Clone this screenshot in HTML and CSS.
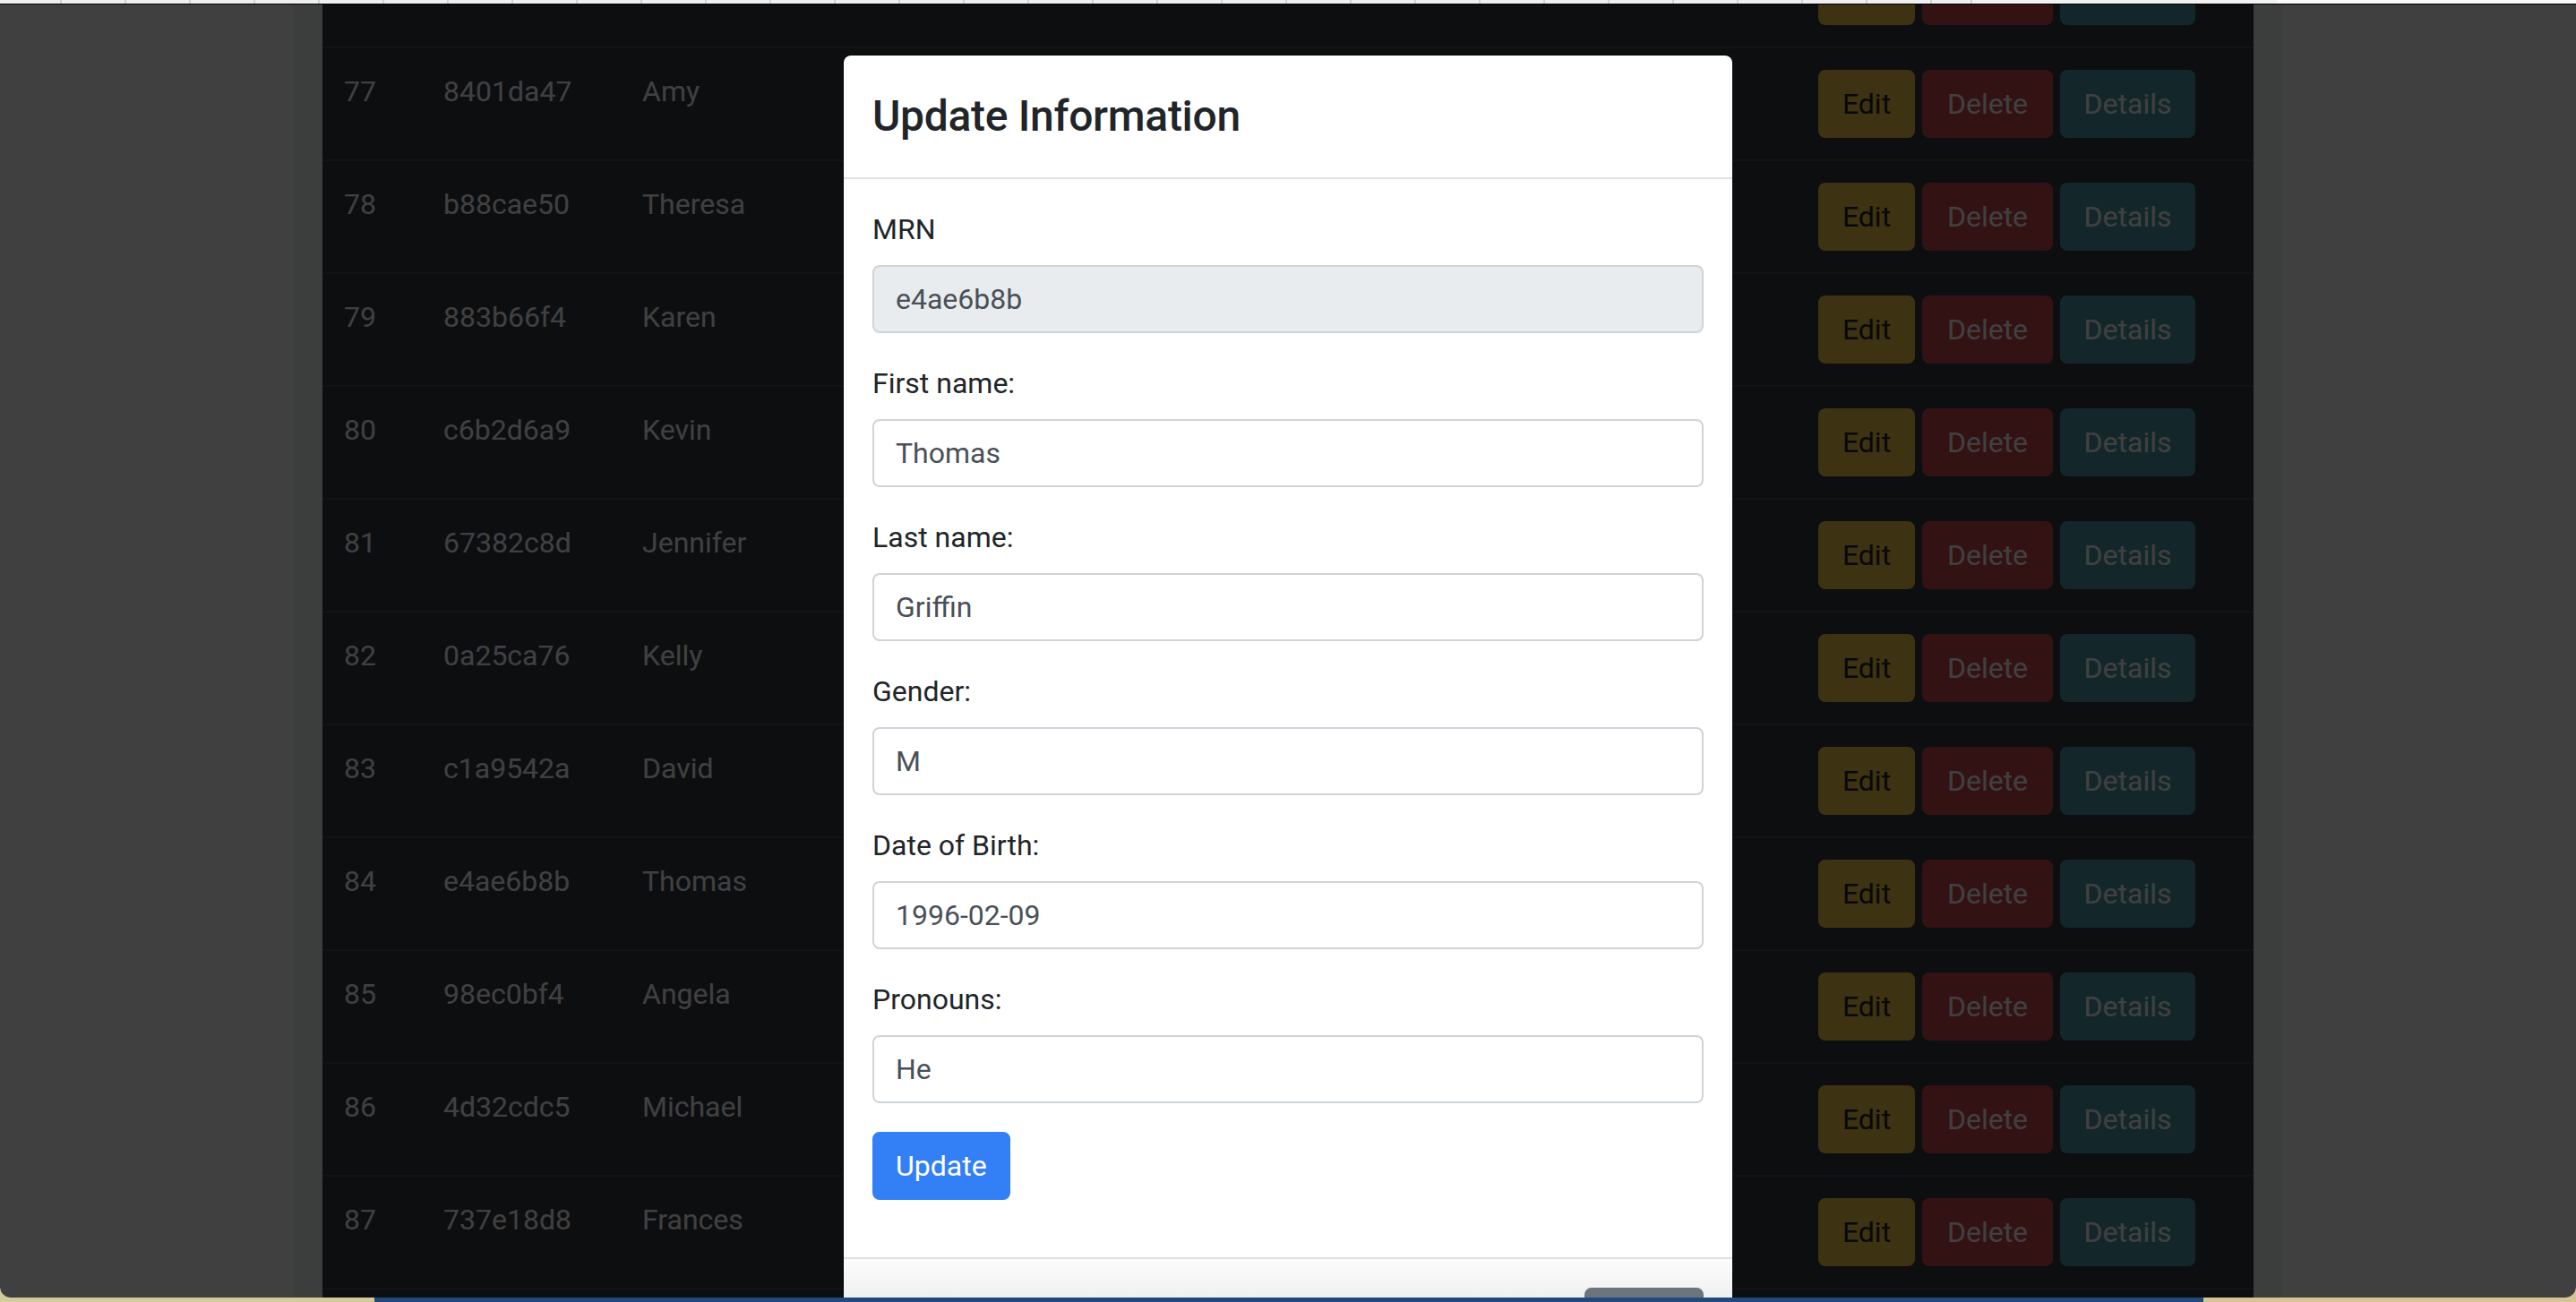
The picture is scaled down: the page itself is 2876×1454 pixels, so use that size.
FILE: index.html
```html
<!DOCTYPE html>
<html lang="en">
<head>
<meta charset="utf-8">
<title>Patients</title>
<link rel="stylesheet" href="styles.css">
</head>
<body>
<div class="window">
  <div class="tabstrip">
    <div class="tabs"></div>
    <div class="tab-rest"></div>
    <div class="tab-active"></div>
  </div>
  <div class="viewport">
    <main class="page">
      <div class="container">
        <div class="panel">
          <table class="records">
            <colgroup>
              <col class="c-id"><col class="c-mrn"><col class="c-name"><col class="c-actions">
            </colgroup>
            <tbody>
              <tr class="scrolled"><td></td><td></td><td></td><td><div class="actions"><span class="btn btn-edit"></span><span class="btn btn-delete"></span><span class="btn btn-details"></span></div></td></tr>
              <tr><td>77</td><td>8401da47</td><td>Amy</td><td><div class="actions"><button class="btn btn-edit">Edit</button><button class="btn btn-delete">Delete</button><button class="btn btn-details">Details</button></div></td></tr>
              <tr><td>78</td><td>b88cae50</td><td>Theresa</td><td><div class="actions"><button class="btn btn-edit">Edit</button><button class="btn btn-delete">Delete</button><button class="btn btn-details">Details</button></div></td></tr>
              <tr><td>79</td><td>883b66f4</td><td>Karen</td><td><div class="actions"><button class="btn btn-edit">Edit</button><button class="btn btn-delete">Delete</button><button class="btn btn-details">Details</button></div></td></tr>
              <tr><td>80</td><td>c6b2d6a9</td><td>Kevin</td><td><div class="actions"><button class="btn btn-edit">Edit</button><button class="btn btn-delete">Delete</button><button class="btn btn-details">Details</button></div></td></tr>
              <tr><td>81</td><td>67382c8d</td><td>Jennifer</td><td><div class="actions"><button class="btn btn-edit">Edit</button><button class="btn btn-delete">Delete</button><button class="btn btn-details">Details</button></div></td></tr>
              <tr><td>82</td><td>0a25ca76</td><td>Kelly</td><td><div class="actions"><button class="btn btn-edit">Edit</button><button class="btn btn-delete">Delete</button><button class="btn btn-details">Details</button></div></td></tr>
              <tr><td>83</td><td>c1a9542a</td><td>David</td><td><div class="actions"><button class="btn btn-edit">Edit</button><button class="btn btn-delete">Delete</button><button class="btn btn-details">Details</button></div></td></tr>
              <tr><td>84</td><td>e4ae6b8b</td><td>Thomas</td><td><div class="actions"><button class="btn btn-edit">Edit</button><button class="btn btn-delete">Delete</button><button class="btn btn-details">Details</button></div></td></tr>
              <tr><td>85</td><td>98ec0bf4</td><td>Angela</td><td><div class="actions"><button class="btn btn-edit">Edit</button><button class="btn btn-delete">Delete</button><button class="btn btn-details">Details</button></div></td></tr>
              <tr><td>86</td><td>4d32cdc5</td><td>Michael</td><td><div class="actions"><button class="btn btn-edit">Edit</button><button class="btn btn-delete">Delete</button><button class="btn btn-details">Details</button></div></td></tr>
              <tr><td>87</td><td>737e18d8</td><td>Frances</td><td><div class="actions"><button class="btn btn-edit">Edit</button><button class="btn btn-delete">Delete</button><button class="btn btn-details">Details</button></div></td></tr>
              <tr class="filler"><td></td><td></td><td></td><td></td></tr>
            </tbody>
          </table>
        </div>
      </div>
    </main>
    <div class="backdrop"></div>
    <div class="modal">
      <div class="dialog">
        <div class="modal-header">
          <h4 class="modal-title">Update Information</h4>
        </div>
        <form class="modal-body">
          <div class="field">
            <label for="mrn">MRN</label>
            <input class="input" id="mrn" type="text" value="e4ae6b8b" readonly>
          </div>
          <div class="field">
            <label for="first">First name:</label>
            <input class="input" id="first" type="text" value="Thomas">
          </div>
          <div class="field">
            <label for="last">Last name:</label>
            <input class="input" id="last" type="text" value="Griffin">
          </div>
          <div class="field">
            <label for="gender">Gender:</label>
            <input class="input" id="gender" type="text" value="M">
          </div>
          <div class="field">
            <label for="dob">Date of Birth:</label>
            <input class="input" id="dob" type="text" value="1996-02-09">
          </div>
          <div class="field">
            <label for="pronouns">Pronouns:</label>
            <input class="input" id="pronouns" type="text" value="He">
          </div>
          <div class="field">
            <button type="button" class="btn btn-primary">Update</button>
          </div>
        </form>
        <div class="modal-footer">
          <span class="btn btn-secondary"></span>
        </div>
      </div>
    </div>
  </div>
</div>
<div class="desktop"></div>
</body>
</html>
```

FILE: styles.css
```css
* {
  box-sizing: border-box;
  margin: 0;
  padding: 0;
}

html, body {
  width: 2876px;
  height: 1454px;
  overflow: hidden;
}

body {
  background: linear-gradient(90deg, #d4cb98 0 418px, #1f4a7b 418px 2460px, #d8c493 2460px);
  font-family: Roboto, "Liberation Sans", Arial, sans-serif;
  display: flex;
  flex-direction: column;
}

.window {
  height: 1449px;
  flex: none;
  display: flex;
  flex-direction: column;
  border-radius: 0 0 12px 12px;
  overflow: hidden;
  background: #fff;
}

.tabstrip {
  height: 5px;
  flex: none;
  display: flex;
  border-bottom: 1px solid #000;
  background: #efefef;
}

.tabs {
  width: 2200px;
  background: repeating-linear-gradient(90deg, #efefef 0 67px, #d2d2d2 67px 69px, #efefef 69px 72px);
}

.tab-rest {
  width: 342px;
  border-left: 2px solid #d2d2d2;
  background: #f2f2f2;
}

.tab-active {
  flex: 1;
  background: #fafafa;
}

.viewport {
  flex: 1;
  position: relative;
  overflow: hidden;
  background: #fff;
}

.container {
  width: 2280px;
  margin: 0 auto;
  padding: 0 30px;
}

.panel {
  padding: 0 32px;
  background: #eef6f2;
}

.records {
  width: 100%;
  margin-top: -79px;
  table-layout: fixed;
  border-collapse: separate;
  border-spacing: 0;
  background: #343a40;
  color: #fff;
}

.c-id { width: 111px; }
.c-mrn { width: 222px; }
.c-actions { width: 510px; }

.records td {
  padding: 24px;
  border-top: 2px solid #454d55;
  vertical-align: top;
  font-size: 32px;
  line-height: 48px;
  white-space: nowrap;
}

.actions {
  display: flex;
  gap: 8px;
}

.btn {
  display: inline-block;
  height: 76px;
  font-family: inherit;
  font-size: 32px;
  line-height: 48px;
  padding: 12px 24px;
  border: 2px solid transparent;
  border-radius: 8px;
  text-align: center;
  cursor: pointer;
}

.btn-edit {
  width: 108px;
  background: #f4c848;
  border-color: #f4c848;
  color: #212529;
}

.btn-delete {
  width: 146px;
  background: #cc4850;
  border-color: #cc4850;
  color: #fff;
}

.btn-details {
  width: 151px;
  background: #4c9cac;
  border-color: #4c9cac;
  color: #fff;
}

.backdrop {
  position: absolute;
  inset: 0;
  background: rgba(0, 0, 0, 0.75);
}

.modal {
  position: absolute;
  inset: 0;
  overflow: hidden;
}

.dialog {
  width: 996px;
  margin: 55px auto 0;
  background: #fff;
  background-clip: padding-box;
  border: 2px solid rgba(0, 0, 0, 0.2);
  border-radius: 10px;
  color: #212529;
}

.modal-header {
  padding: 32px;
  border-bottom: 2px solid #dee2e6;
}

.modal-title {
  font-size: 48px;
  line-height: 72px;
  font-weight: 500;
  letter-spacing: -0.3px;
}

.modal-body {
  display: block;
  padding: 32px;
}

.field {
  margin-bottom: 32px;
}

.field label {
  display: block;
  margin-bottom: 16px;
  font-size: 32px;
  line-height: 48px;
  color: #212529;
}

.input {
  display: block;
  width: 100%;
  height: 76px;
  padding: 12px 24px;
  font-family: inherit;
  font-size: 32px;
  line-height: 48px;
  color: #495057;
  background: #fff;
  border: 2px solid #ced4da;
  border-radius: 8px;
  outline: none;
}

.input[readonly] {
  background: #e9ecef;
}

.btn-primary {
  background: #337ff6;
  border-color: #337ff6;
  color: #fff;
}

.modal-footer {
  display: flex;
  justify-content: flex-end;
  padding: 24px;
  border-top: 2px solid #dee2e6;
  background: linear-gradient(180deg, #fdfdfd, #efefef 44px);
}

.btn-secondary {
  margin: 8px;
  width: 133px;
  background: #6c757d;
  border-color: #6c757d;
}

.desktop {
  flex: 1;
}
```
